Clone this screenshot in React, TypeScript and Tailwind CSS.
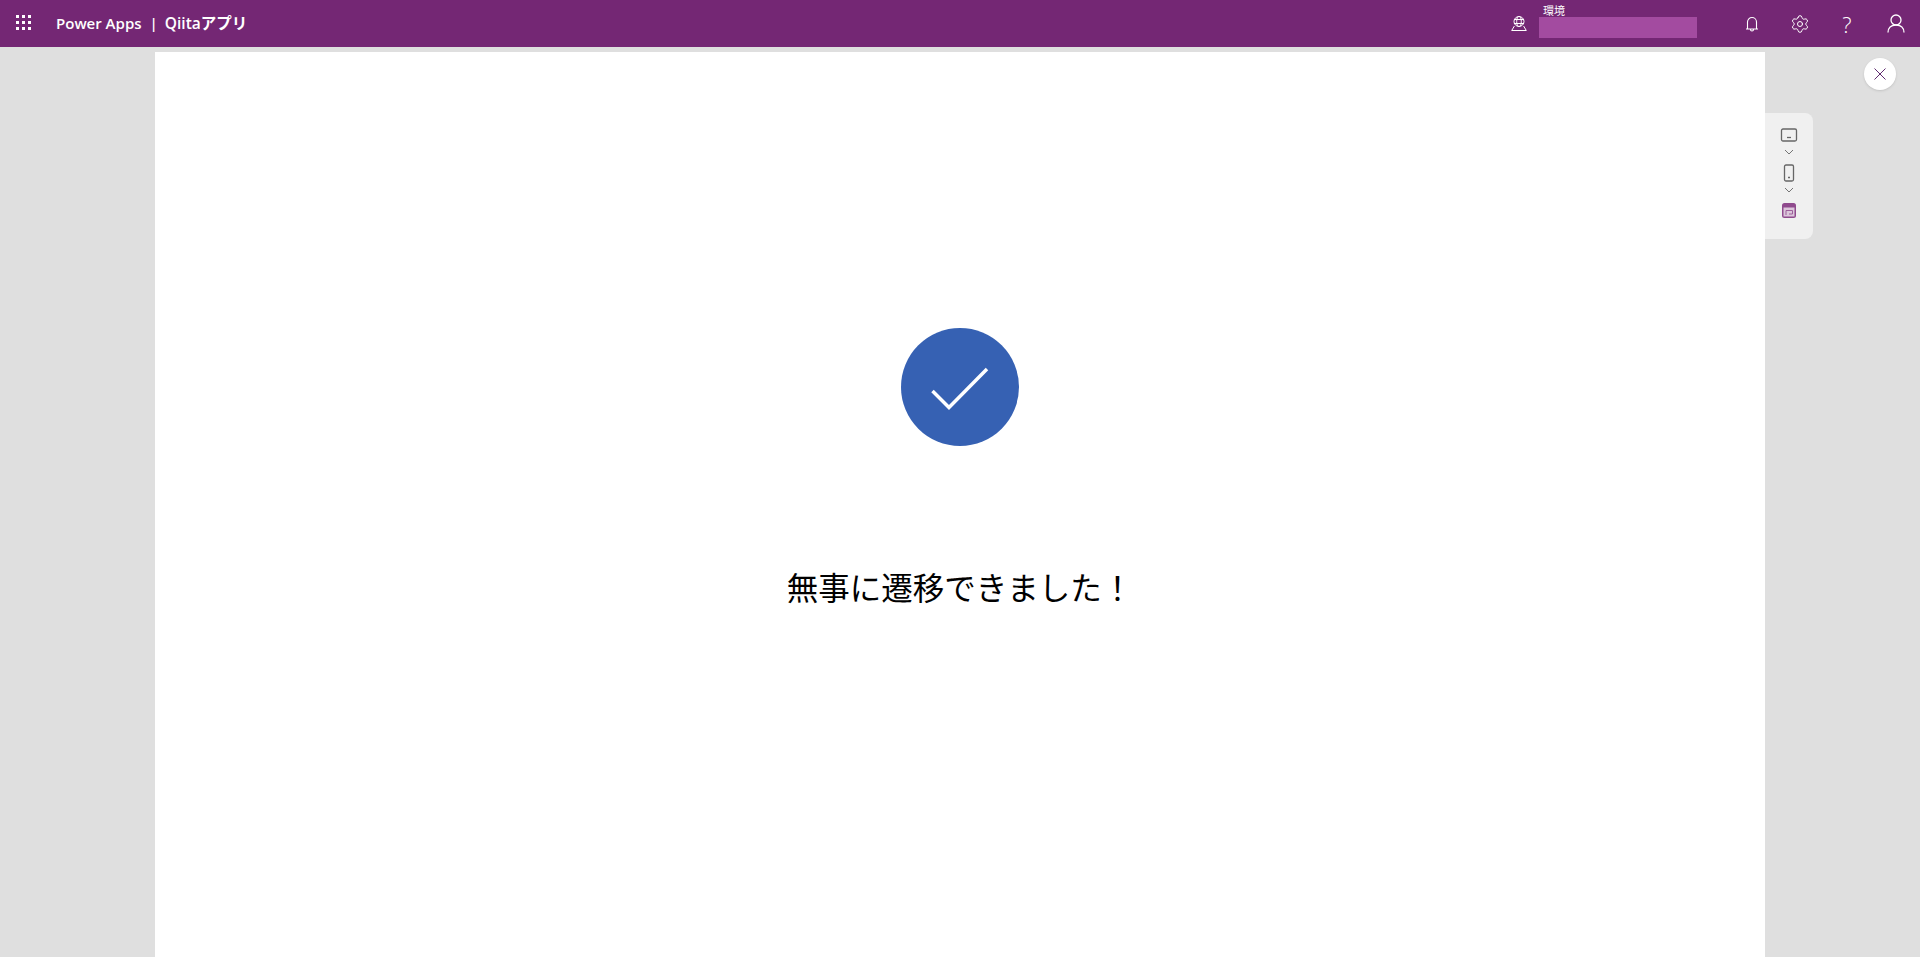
import React from "react";
import { Settings } from "lucide-react";

function Waffle() {
  const dots = [0, 1, 2];
  return (
    <svg width="15" height="15" viewBox="0 0 15 15" fill="#fff">
      {dots.map((r) =>
        dots.map((c) => <rect key={`${r}-${c}`} x={c * 6} y={r * 6} width="3" height="3" />)
      )}
    </svg>
  );
}

function EnvIcon() {
  return (
    <svg width="16" height="15" viewBox="0 0 16 15" fill="none" stroke="#fff" strokeWidth="1">
      <circle cx="8" cy="5.500" r="5" />
      <ellipse cx="8" cy="5.500" rx="2.300" ry="5" />
      <path d="M3 3.500h10M3 7.500h10M3.400 10 .7 14.500h14.600L12.600 10" />
    </svg>
  );
}

function Bell() {
  return (
    <svg width="14" height="16" viewBox="0 0 14 16" fill="none" stroke="#fff" strokeWidth="1.100">
      <path d="M2.500 13V6a4.500 4.500 0 0 1 9 0v7zM1 13h12M5.500 13.500a1.500 1.500 0 0 0 3 0" />
    </svg>
  );
}

function Person() {
  return (
    <svg width="18" height="19" viewBox="0 0 18 19" fill="none" stroke="#fff" strokeWidth="1.300">
      <circle cx="9" cy="6" r="5" />
      <path d="M1 18.500c0-4.500 3-7.500 8-7.500s8 3 8 7.500" />
    </svg>
  );
}

function Chevron({ className }: { className: string }) {
  return (
    <svg className={className} width="10" height="6" viewBox="0 0 10 6" fill="none" stroke="#666" strokeWidth="0.900">
      <path d="M1 1l4 4 4-4" />
    </svg>
  );
}

export default function App() {
  return (
    <div
      className="flex h-[957px] w-full flex-col overflow-hidden bg-[#dfdfdf]"
      style={{ fontFamily: '"Open Sans", "Noto Sans CJK JP", sans-serif' }}
    >
      <header className="flex h-[47px] shrink-0 items-center bg-[#742774] text-white">
        <div className="mb-[2px] ml-[16px] flex w-[16px] items-center">
          <Waffle />
        </div>
        <div className="ml-[24px] flex items-center text-[15px] font-semibold leading-none">
          <span>Power Apps</span>
          <span className="ml-[8px] mr-[7px]">|</span>
          <span className="text-[15.500px]">Qiitaアプリ</span>
        </div>
        <div className="ml-auto flex h-full items-center">
          <EnvIcon />
          <div className="ml-[12px] flex h-full w-[158px] flex-col pt-[5px]">
            <span className="ml-[4px] text-[11px] leading-[12px]">環境</span>
            <div className="h-[21px] w-full bg-[#a34ba0]" />
          </div>
          <div className="ml-[48px] flex w-[14px] justify-center">
            <Bell />
          </div>
          <div className="ml-[31px] flex w-[20px] justify-center">
            <Settings size={20} strokeWidth={1.200} color="#fff" />
          </div>
          <div className="ml-[32px] flex w-[10px] justify-center text-[22px] font-light leading-none">?</div>
          <div className="ml-[35px] mr-[15px] flex w-[18px] justify-center">
            <Person />
          </div>
        </div>
      </header>

      <div className="flex min-h-0 flex-1 pt-[5px]">
        <div className="w-[155px] shrink-0" />
        <main className="flex w-[1610px] shrink-0 flex-col items-center bg-white pt-[276px]">
          <div className="flex h-[118px] w-[118px] items-center justify-center rounded-full bg-[#3661b3]">
            <svg width="118" height="118" viewBox="0 0 118 118" fill="none" stroke="#fff" strokeWidth="3.500">
              <path d="M31.500 63 48 79.500 86 41" />
            </svg>
          </div>
          <div
            className="mt-[117px] text-[31.500px] leading-[46px] text-black"
            style={{ fontFamily: '"Noto Sans CJK JP", sans-serif' }}
          >
            無事に遷移できました！
          </div>
        </main>
        <div className="flex flex-1 items-start">
          <div className="mt-[61px] flex h-[126px] w-[48px] flex-col items-center rounded-r-[8px] bg-[#f0f0f0] pt-[15px]">
            <svg width="18" height="14" viewBox="0 0 18 14" fill="none" stroke="#666" strokeWidth="1.300">
              <rect x="1.500" y="1" width="15" height="12" rx="1.500" />
              <path d="M7 9.500h4" />
            </svg>
            <Chevron className="mt-[7px]" />
            <svg className="mt-[9px]" width="12" height="18" viewBox="0 0 12 18" fill="none" stroke="#666" strokeWidth="1.300">
              <rect x="1.500" y="1" width="9" height="16" rx="1.500" />
              <path d="M5 13.500h2" />
            </svg>
            <Chevron className="mt-[5px]" />
            <svg className="mt-[10px]" width="14" height="15" viewBox="0 0 14 15">
              <rect x="0" y="0" width="14" height="15" rx="2.500" fill="#8f4a8d" />
              <rect x="1.500" y="4.500" width="11" height="9" fill="#dcc6db" />
              <path d="M4 12V7.500h6.500V11H7" fill="none" stroke="#9c5f9a" strokeWidth="1" />
            </svg>
          </div>
          <button className="ml-[51px] mt-[6px] flex h-[32px] w-[32px] items-center justify-center rounded-full bg-white shadow-sm">
            <svg width="12" height="12" viewBox="0 0 12 12" fill="none" stroke="#5f2a6f" strokeWidth="1">
              <path d="M.5.5l11 11M11.500.5l-11 11" />
            </svg>
          </button>
        </div>
      </div>
    </div>
  );
}
